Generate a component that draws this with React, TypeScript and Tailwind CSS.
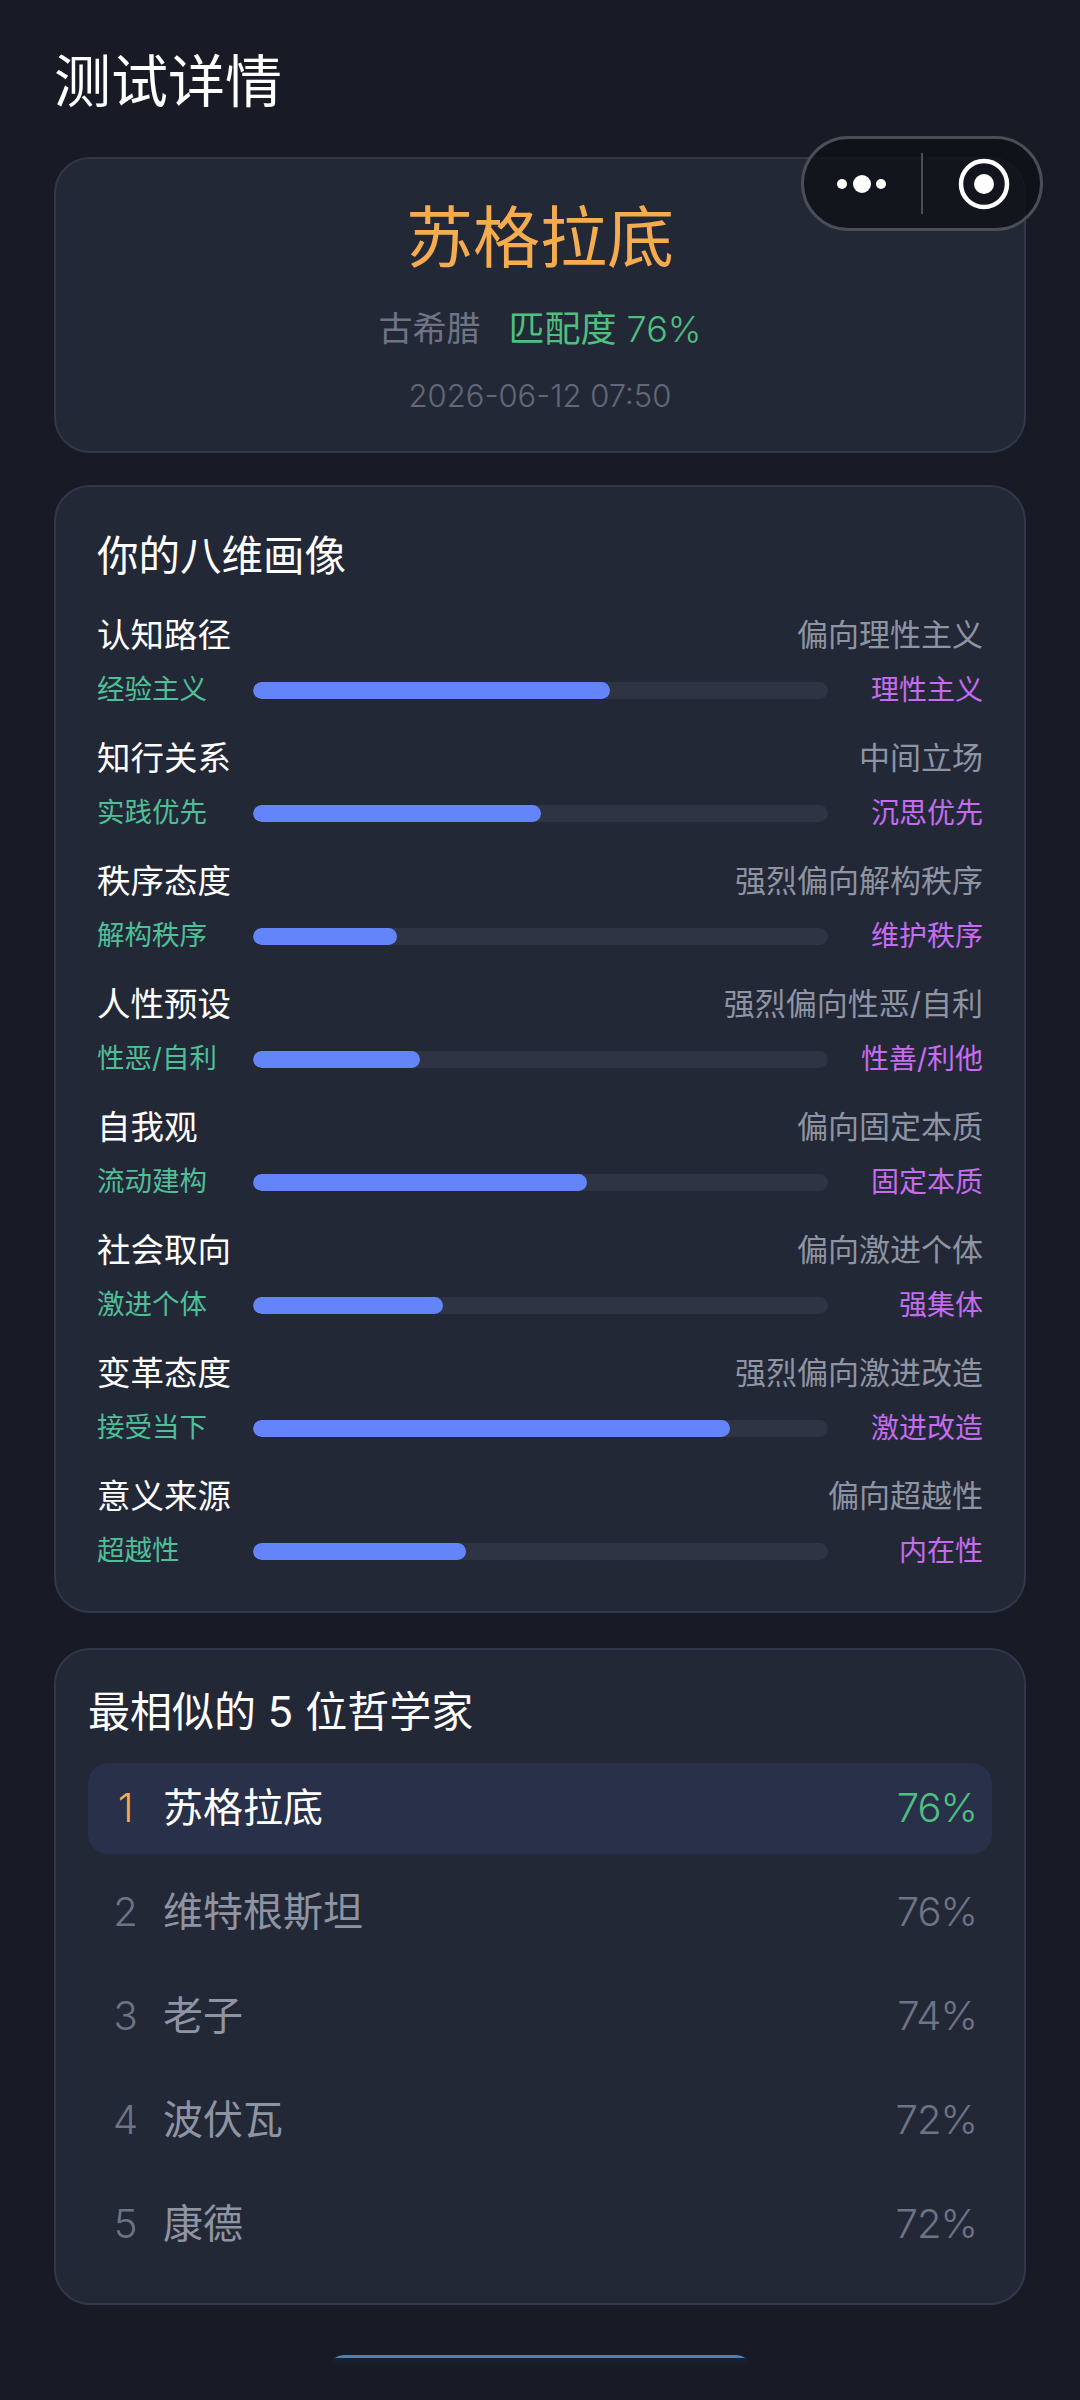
import { useMemo } from "react";

type Trait = {
    name: string;
    verdict: string;
    left: string;
    right: string;
    value: number;
};

const TRAITS: Trait[] = [
    { name: "认知路径", verdict: "偏向理性主义", left: "经验主义", right: "理性主义", value: 62 },
    { name: "知行关系", verdict: "中间立场", left: "实践优先", right: "沉思优先", value: 50 },
    { name: "秩序态度", verdict: "强烈偏向解构秩序", left: "解构秩序", right: "维护秩序", value: 25 },
    { name: "人性预设", verdict: "强烈偏向性恶/自利", left: "性恶/自利", right: "性善/利他", value: 29 },
    { name: "自我观", verdict: "偏向固定本质", left: "流动建构", right: "固定本质", value: 58 },
    { name: "社会取向", verdict: "偏向激进个体", left: "激进个体", right: "强集体", value: 33 },
    { name: "变革态度", verdict: "强烈偏向激进改造", left: "接受当下", right: "激进改造", value: 83 },
    { name: "意义来源", verdict: "偏向超越性", left: "超越性", right: "内在性", value: 37 },
];

const MATCHES = [
    { name: "苏格拉底", score: 76 },
    { name: "维特根斯坦", score: 76 },
    { name: "老子", score: 74 },
    { name: "波伏瓦", score: 72 },
    { name: "康德", score: 72 },
];

const CARD = "rounded-[36px] border-2 border-[#32374a] bg-[#232837]";

function CapsuleMenu() {
    return (
        <div className="absolute left-[801px] top-[136px] z-10 flex h-[95px] w-[242px] items-center rounded-full border-[3px] border-[#4b4e56] bg-[#0e1015]/80">
            <div className="flex h-full w-[117px] items-center justify-center">
                <svg width="54" height="20" viewBox="0 0 54 20" aria-hidden="true">
                    <circle cx="6" cy="10" r="5" fill="#fff" />
                    <circle cx="26" cy="10" r="9" fill="#fff" />
                    <circle cx="45" cy="10" r="5" fill="#fff" />
                </svg>
            </div>
            <div className="h-[61px] w-[2px] bg-[#4b4e56]" />
            <div className="flex h-full flex-1 items-center justify-center pl-[5px]">
                <svg width="52" height="52" viewBox="0 0 52 52" aria-hidden="true">
                    <circle cx="26" cy="26" r="23" fill="none" stroke="#fff" strokeWidth="4.5" />
                    <circle cx="26" cy="26" r="10" fill="#fff" />
                </svg>
            </div>
        </div>
    );
}

function TraitRow({ trait }: { trait: Trait }) {
    return (
        <div className="h-[123px]">
            <div className="flex h-[58px] items-center justify-between">
                <span className="text-[33.5px] text-white">{trait.name}</span>
                <span className="text-[31px] text-[#8f94a3]">{trait.verdict}</span>
            </div>
            <div className="mt-[2px] flex h-[48px] items-center">
                <span className="w-[156px] shrink-0 text-[27.5px] text-[#4fbf97]">{trait.left}</span>
                <div className="h-[17px] w-[575px] overflow-hidden rounded-full bg-[#2f3444]">
                    <div className="h-full rounded-full bg-[#6485f9]" style={{ width: `${trait.value}%` }} />
                </div>
                <span className="flex-1 text-right text-[28px] text-[#c56cf0]">{trait.right}</span>
            </div>
        </div>
    );
}

export default function App() {
    const rows = useMemo(() => MATCHES.map((match, index) => ({ ...match, rank: index + 1 })), []);

    return (
        <div className="relative flex h-[2400px] w-[1080px] flex-col overflow-hidden bg-[#181b25] font-['Inter','Noto_Sans_CJK_SC',sans-serif] font-normal">
            <CapsuleMenu />
            <div className="h-[2358px] shrink-0 overflow-hidden px-[54px]">
                <h1 className="flex h-[157px] items-start pt-[46px] text-[57px] leading-[72px] text-white">测试详情</h1>

                <section className={`${CARD} flex h-[296px] flex-col items-center`}>
                    <div className="mt-[34px] text-[67px] leading-[90px] text-[#f5ac4e]">苏格拉底</div>
                    <div className="mt-[21px] flex items-center gap-[28px] leading-[50px]">
                        <span className="text-[34px] text-[#6f7484]">古希腊</span>
                        <span className="text-[36px] text-[#4fbf7f]">
                            匹配度 <span className="font-light">76%</span>
                        </span>
                    </div>
                    <div className="mt-[20px] text-[31px] leading-[44px] font-light text-[#636878]">2026-06-12 07:50</div>
                </section>

                <section className={`${CARD} mt-[32px] h-[1128px] px-[41px] pt-[39px]`}>
                    <h2 className="h-[80px] text-[41.5px] leading-[60px] text-white">你的八维画像</h2>
                    {TRAITS.map((trait) => (
                        <TraitRow key={trait.name} trait={trait} />
                    ))}
                </section>

                <section className={`${CARD} mt-[35px] h-[657px] px-[32px] pt-[34px]`}>
                    <h2 className="h-[79px] text-[42px] leading-[56px] text-white">最相似的 5 位哲学家</h2>
                    {rows.map((row) => (
                        <div
                            key={row.rank}
                            className={`mb-[13px] flex h-[91px] items-center rounded-[20px] pr-[15px] pb-[2px] ${
                                row.rank === 1 ? "bg-[#29304a]" : ""
                            }`}
                        >
                            <span
                                className={`w-[75px] text-center text-[40px] font-light ${
                                    row.rank === 1 ? "text-[#f5ac4e]" : "text-[#6f7484]"
                                }`}
                            >
                                {row.rank}
                            </span>
                            <span className={`text-[40px] ${row.rank === 1 ? "text-white" : "text-[#8f94a3]"}`}>
                                {row.name}
                            </span>
                            <span
                                className={`ml-auto text-[40px] font-light tracking-[-1px] ${
                                    row.rank === 1 ? "text-[#4fbf7f]" : "text-[#6f7484]"
                                }`}
                            >
                                {row.score}%
                            </span>
                        </div>
                    ))}
                </section>

                <button className="mx-auto mt-[50px] block h-[96px] w-[424px] rounded-[16px] bg-[#4f80b2]" />
            </div>
            <div className="mx-auto h-[7px] w-[414px] bg-gradient-to-b from-[#14233a] to-[#1a1b24]" />
        </div>
    );
}
